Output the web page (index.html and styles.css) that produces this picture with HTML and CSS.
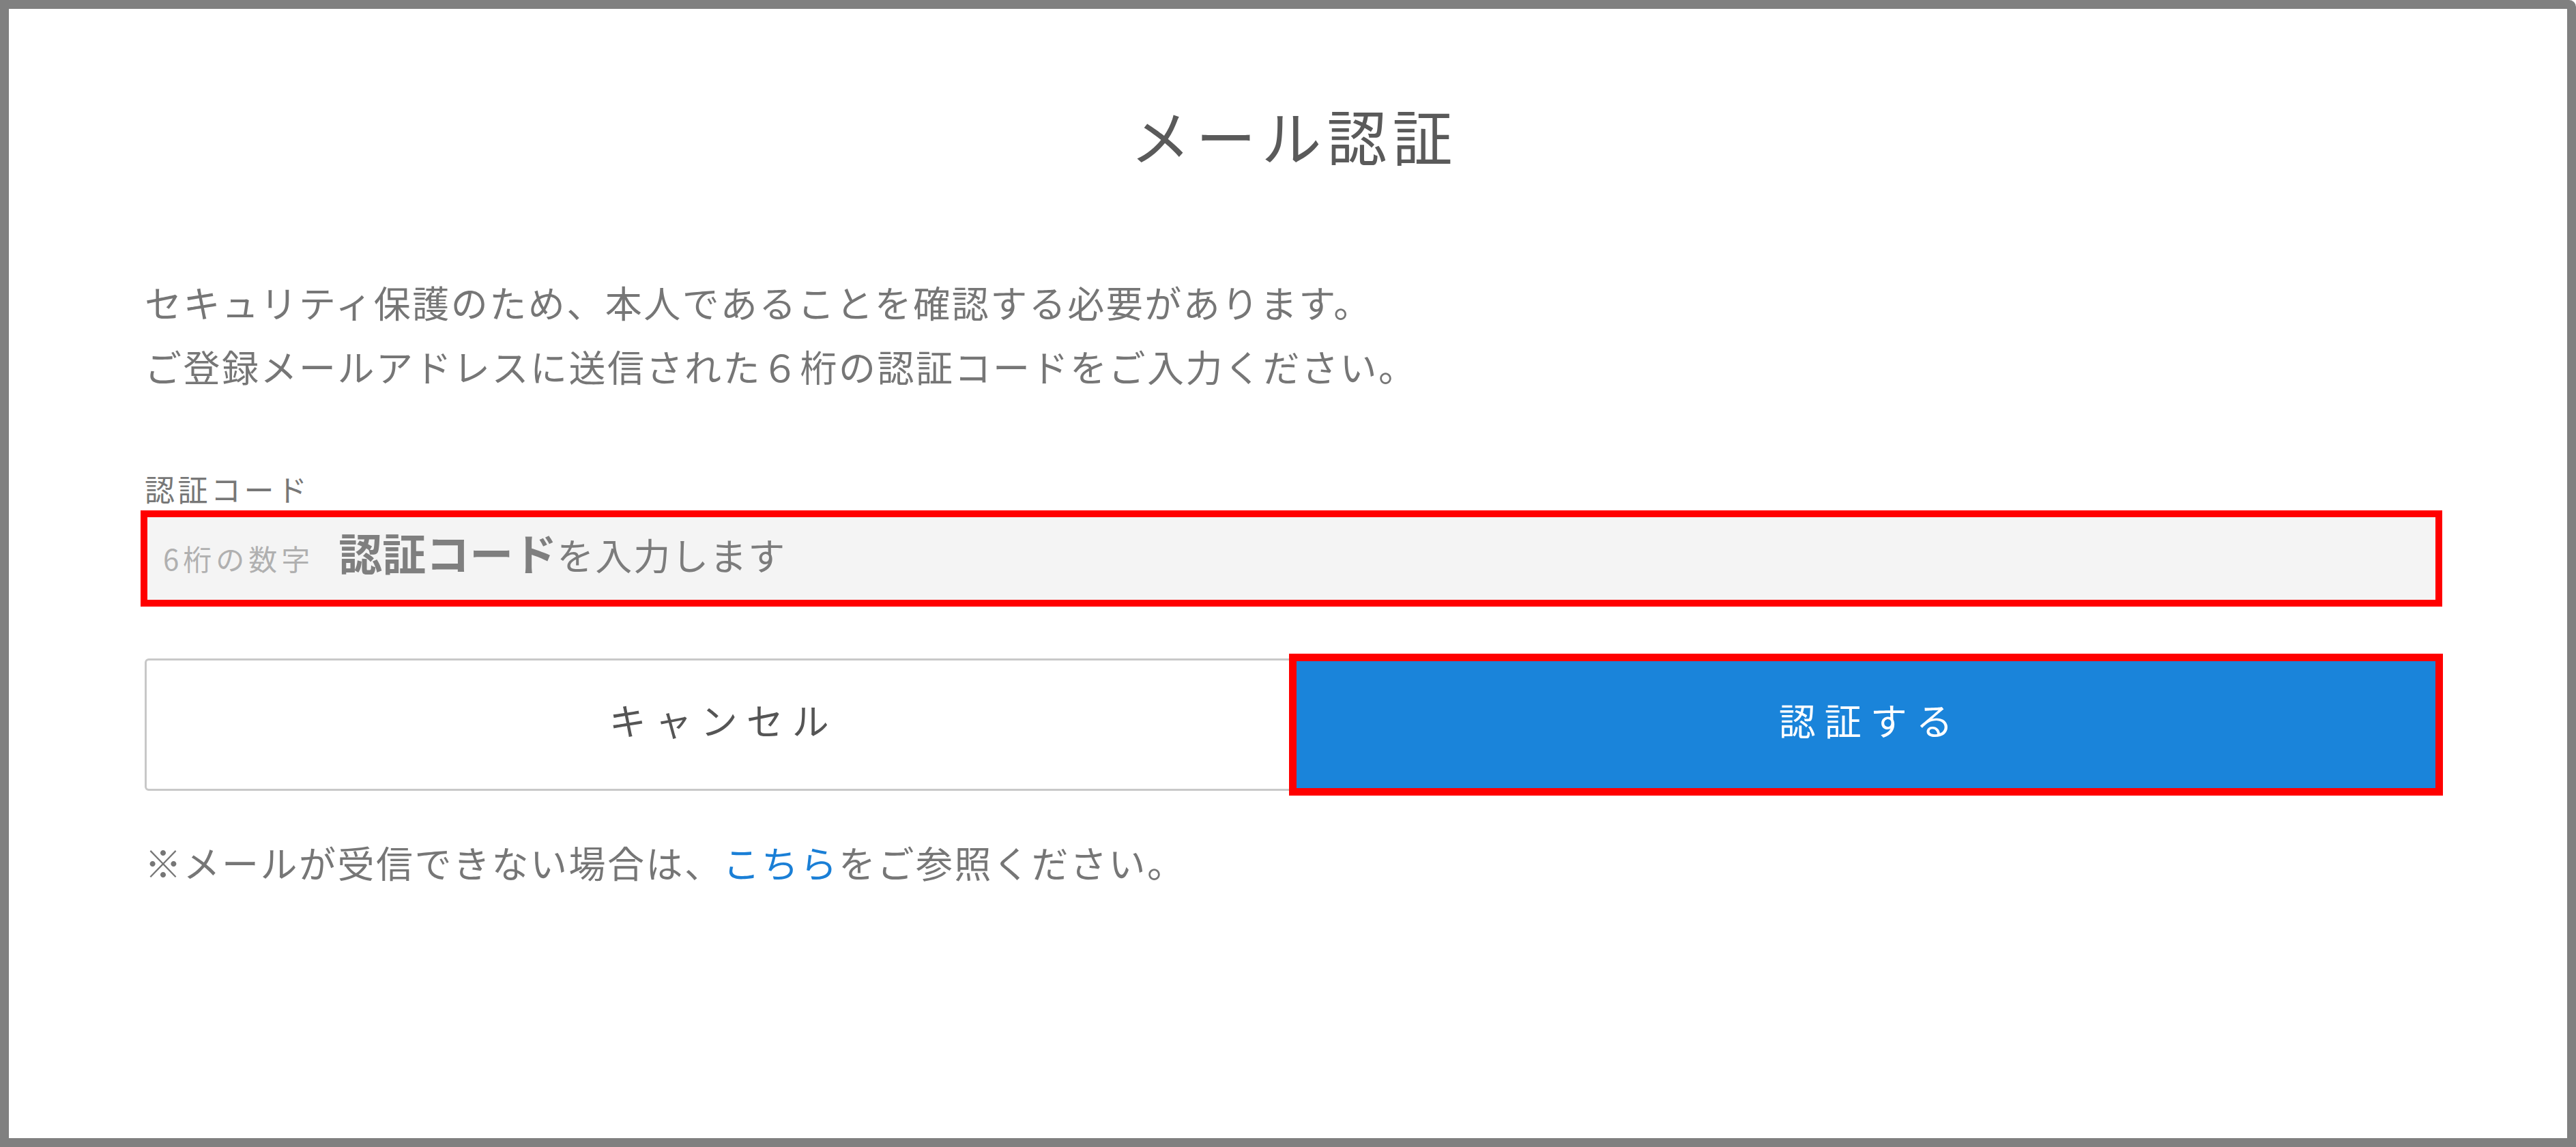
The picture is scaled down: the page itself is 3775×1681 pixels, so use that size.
FILE: index.html
```html
<!DOCTYPE html>
<html lang="ja">
<head>
<meta charset="utf-8">
<title>メール認証</title>
<link rel="stylesheet" href="styles.css">
</head>
<body>
<div class="frame">
  <main class="card">
    <h1 class="title">メール認証</h1>
    <p class="lead">セキュリティ保護のため、本人であることを確認する必要があります。<br>ご登録メールアドレスに送信された６桁の認証コードをご入力ください。</p>
    <span class="field-label">認証コード</span>
    <div class="input" role="textbox" aria-label="認証コード">
      <div class="ph"><span class="ph-small">6桁の数字</span><span class="ph-main"><strong>認証コード</strong>を入力します</span></div>
    </div>
    <div class="actions">
      <button class="btn btn-cancel" type="button">キャンセル</button>
      <button class="btn btn-submit" type="button">認証する</button>
    </div>
    <p class="note">※メールが受信できない場合は、<a href="#">こちら</a>をご参照ください。</p>
  </main>
</div>
</body>
</html>
```

FILE: styles.css
```css
html, body {
  margin: 0;
  padding: 0;
  background: #ffffff;
}

body {
  font-family: "Noto Sans CJK JP", "Noto Sans", sans-serif;
}

.frame {
  box-sizing: border-box;
  width: 3775px;
  height: 1681px;
  border: 13px solid #808080;
  border-radius: 0 10px 0 0;
  background: #ffffff;
  padding: 124px 189px 0 199px;
}

.card {
  width: 3361px;
}

.title {
  margin: 0;
  font-size: 88px;
  font-weight: 400;
  line-height: 120px;
  letter-spacing: 8px;
  padding-left: 8px;
  text-align: center;
  color: #5a5a5a;
}

.lead {
  margin: 139px 0 0;
  font-size: 54px;
  line-height: 94px;
  letter-spacing: 2.5px;
  color: #767676;
}

.field-label {
  display: block;
  margin-top: 102px;
  font-size: 44px;
  line-height: 60px;
  letter-spacing: 4.5px;
  color: #777777;
}

.input {
  box-sizing: border-box;
  margin-top: 8px;
  height: 129px;
  background: #f4f4f4;
  outline: 10px solid #ff0000;
  outline-offset: -4px;
  display: flex;
  align-items: center;
  padding-left: 27px;
}

.ph {
  line-height: 76px;
  white-space: nowrap;
}

.ph-small {
  font-size: 42px;
  letter-spacing: 6px;
  color: #b0b0b0;
  margin-right: 36px;
}

.ph-main {
  font-size: 54px;
  letter-spacing: 2px;
  color: #7c7c7c;
}

.ph-main strong {
  font-size: 64px;
  font-weight: 700;
  letter-spacing: 0;
  color: #7f7f7f;
}

.actions {
  display: flex;
  margin-top: 82px;
  height: 194px;
}

.btn {
  flex: 1 1 0;
  box-sizing: border-box;
  margin: 0;
  padding: 0 0 16px 13px;
  font-family: inherit;
  font-size: 54px;
  letter-spacing: 13px;
  cursor: pointer;
}

.btn-cancel {
  background: #ffffff;
  border: 3px solid #c8c8c8;
  border-radius: 6px;
  color: #555555;
}

.btn-submit {
  position: relative;
  background: #1a84da;
  border: none;
  border-radius: 0;
  color: #ffffff;
  outline: 11px solid #ff0000;
  outline-offset: -4px;
}

.note {
  margin: 58px 0 0;
  font-size: 54px;
  line-height: 94px;
  letter-spacing: 2.5px;
  color: #767676;
}

.note a {
  color: #1a7fd6;
  text-decoration: none;
}
```
